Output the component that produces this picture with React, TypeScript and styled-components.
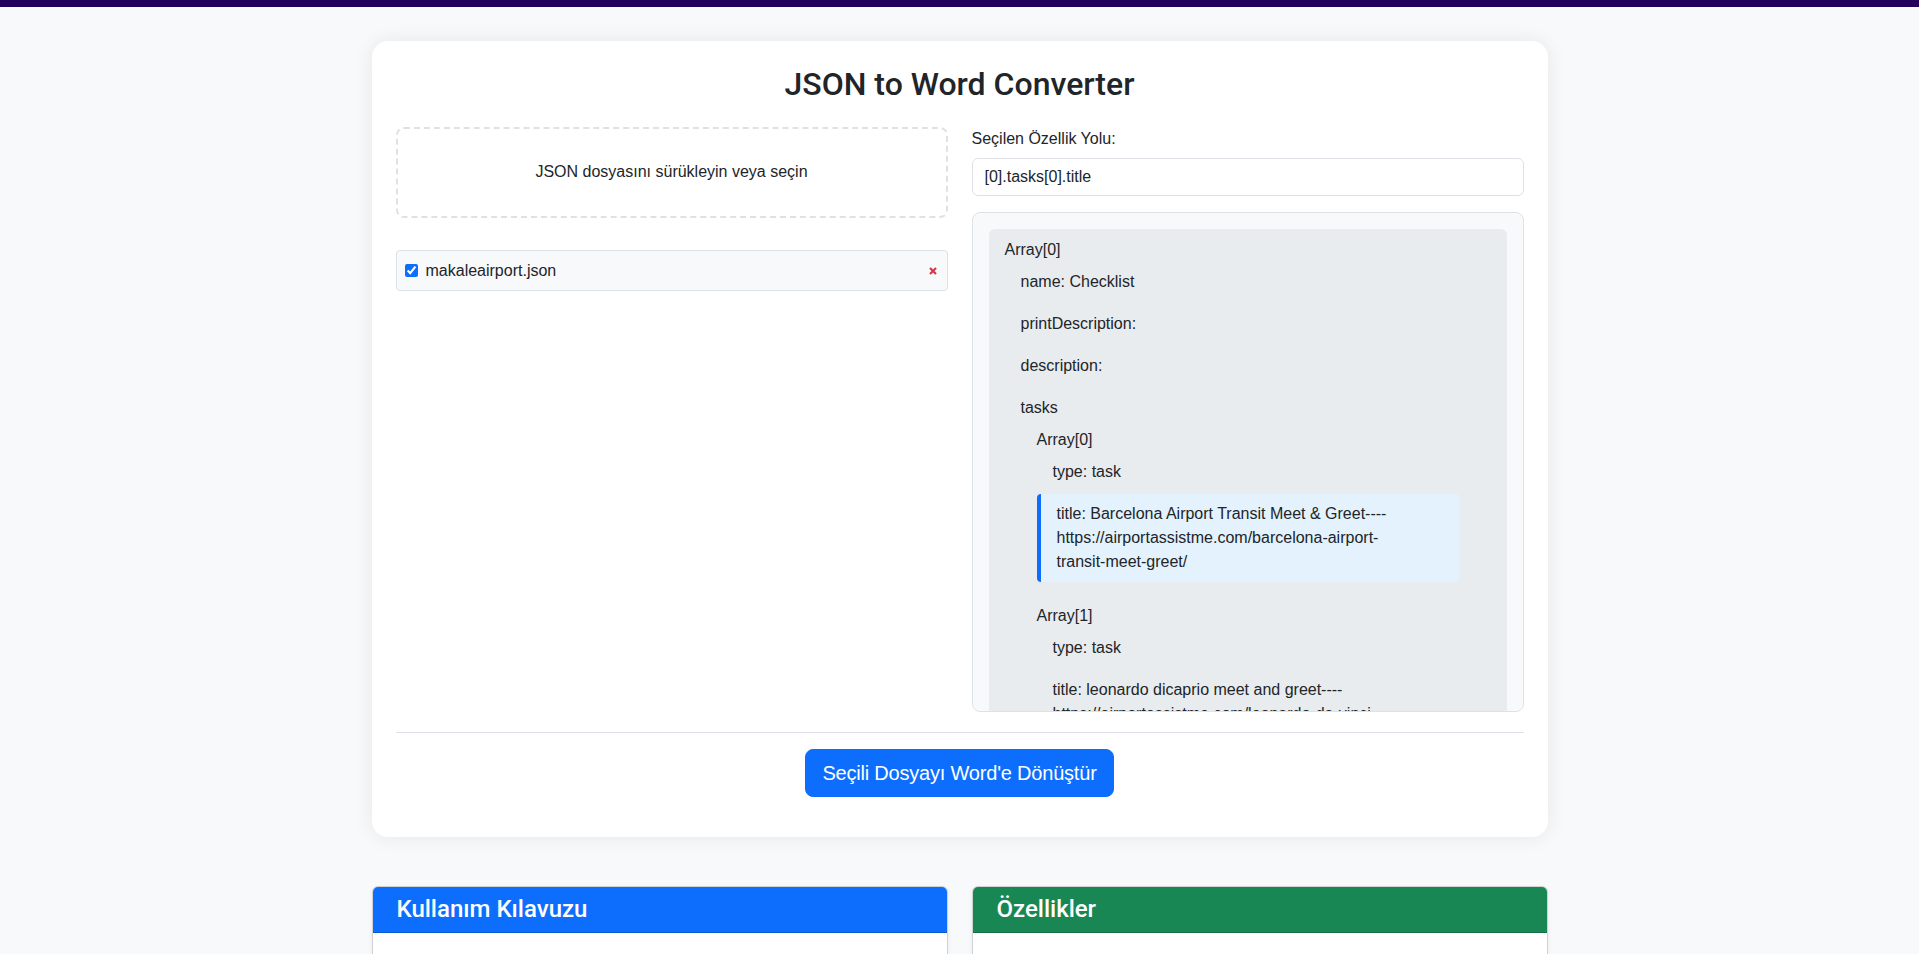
import React from "react";
import styled, { createGlobalStyle } from "styled-components";

const GlobalStyle = createGlobalStyle`
  *, *::before, *::after { box-sizing: border-box; }
  html, body { margin: 0; padding: 0; }
  body {
    background: #f8f9fa;
    font-family: "Liberation Sans", Arial, sans-serif;
    font-size: 16px;
    line-height: 1.5;
    color: #212529;
  }
`;

const TopBar = styled.div`
  height: 7px;
  background: #22005b;
`;

const Container = styled.main`
  width: 1176px;
  margin: 34px auto 0;
`;

const MainCard = styled.section`
  background: #fff;
  border-radius: 16px;
  box-shadow: 0 0 20px rgba(0, 0, 0, 0.08);
  padding: 24px;
`;

const Title = styled.h2`
  margin: 0 0 24px;
  font-family: Roboto, "Liberation Sans", Arial, sans-serif;
  font-weight: 500;
  font-size: 32px;
  line-height: 1.2;
  text-align: center;
  color: #212529;
`;

const Columns = styled.div`
  display: grid;
  grid-template-columns: 1fr 1fr;
  gap: 24px;
`;

const Column = styled.div`
  display: flex;
  flex-direction: column;
  min-width: 0;
`;

const DropZone = styled.div`
  border: 2px dashed #dee2e6;
  border-radius: 8px;
  padding: 31px 20px 32px;
  text-align: center;
  cursor: pointer;
`;

const FileList = styled.ul`
  list-style: none;
  margin: 32px 0 0;
  padding: 0;
  display: flex;
  flex-direction: column;
  gap: 8px;
`;

const FileItem = styled.li`
  display: flex;
  align-items: center;
  gap: 8px;
  padding: 7.5px 10px 7.5px 8px;
  background: #f8f9fa;
  border: 1px solid #dee2e6;
  border-radius: 4px;
`;

const FileCheckbox = styled.input`
  margin: 0;
  width: 13px;
  height: 13px;
  accent-color: #0d6efd;
`;

const FileName = styled.span`
  flex: 1;
`;

const RemoveButton = styled.button`
  border: none;
  background: none;
  padding: 0;
  display: flex;
  color: #dc3545;
  cursor: pointer;
`;

const FieldLabel = styled.label`
  display: block;
  margin-bottom: 7px;
`;

const PathInput = styled.input`
  width: 100%;
  height: 38px;
  padding: 6px 12px;
  border: 1px solid #dee2e6;
  border-radius: 6px;
  font: inherit;
  color: #212529;
  background: #fff;
  outline: none;
`;

const TreeBox = styled.div`
  margin-top: 16px;
  height: 500px;
  overflow: hidden;
  background: #f8f9fa;
  border: 1px solid #dee2e6;
  border-radius: 8px;
  padding: 16px;
`;

const RootNode = styled.div`
  background: #e9ecef;
  border-radius: 6px;
  padding: 9px 16px 8px;
`;

const NestedNode = styled.div`
  margin: 8px 0 12px;
  padding: 0 16px;
`;

const NodeLabel = styled.div`
  line-height: 24px;
`;

const Children = styled.div`
  display: flex;
  flex-direction: column;
  gap: 2px;
`;

const Leaf = styled.div<{ $selected?: boolean }>`
  padding: 8px 48px 8px 16px;
  line-height: 24px;
  border-radius: 4px;
  border-left: ${(p) => (p.$selected ? "4px solid #0d6efd" : "none")};
  background: ${(p) => (p.$selected ? "#e3f2fd" : "transparent")};
  cursor: pointer;
`;

const Divider = styled.hr`
  border: 0;
  border-top: 1px solid #dee2e6;
  margin: 20px 0 16px;
`;

const Actions = styled.div`
  display: flex;
  justify-content: center;
  margin-bottom: 16px;
`;

const ConvertButton = styled.button`
  background: #0d6efd;
  color: #fff;
  border: 1px solid #0d6efd;
  border-radius: 8px;
  padding: 8px 16px;
  font-family: "Liberation Sans", Arial, sans-serif;
  font-size: 20px;
  letter-spacing: -0.2px;
  line-height: 1.5;
  cursor: pointer;
`;

const InfoGrid = styled.div`
  display: grid;
  grid-template-columns: 1fr 1fr;
  gap: 24px;
  margin-top: 49px;
  margin-bottom: 40px;
`;

const InfoCard = styled.section`
  background: #fff;
  border: 1px solid rgba(0, 0, 0, 0.175);
  border-radius: 6px;
  overflow: hidden;
  box-shadow: 0 2px 4px rgba(0, 0, 0, 0.075);
`;

const InfoHeader = styled.div<{ $tone: string }>`
  background: ${(p) => p.$tone};
  color: #fff;
  padding: 8px 24px;
  border-bottom: 1px solid rgba(0, 0, 0, 0.175);
`;

const InfoTitle = styled.h4`
  margin: 0;
  font-family: Roboto, "Liberation Sans", Arial, sans-serif;
  font-size: 24px;
  font-weight: 500;
  line-height: 1.2;
`;

const InfoBody = styled.div`
  padding: 19px 24px 16px;
`;

const InfoList = styled.ul`
  margin: 0;
  padding-left: 0;
  list-style: none;
  display: flex;
  flex-direction: column;
  gap: 8px;
`;

type TreeItem = {
  label: string;
  value?: string;
  selected?: boolean;
  children?: TreeItem[];
};

const tree: TreeItem = {
  label: "Array[0]",
  children: [
    { label: "name", value: "Checklist" },
    { label: "printDescription", value: "" },
    { label: "description", value: "" },
    {
      label: "tasks",
      children: [
        {
          label: "Array[0]",
          children: [
            { label: "type", value: "task" },
            {
              label: "title",
              value:
                "Barcelona Airport Transit Meet & Greet----https://airportassistme.com/barcelona-airport-transit-meet-greet/",
              selected: true,
            },
          ],
        },
        {
          label: "Array[1]",
          children: [
            { label: "type", value: "task" },
            {
              label: "title",
              value:
                "leonardo dicaprio meet and greet----https://airportassistme.com/leonardo-da-vinci-airport-meet-greet/",
            },
          ],
        },
        {
          label: "Array[2]",
          children: [
            { label: "type", value: "task" },
            { label: "title", value: "Rome Airport Meet & Greet" },
          ],
        },
      ],
    },
  ],
};

const XIcon = () => (
  <svg width="8" height="8" viewBox="0 0 8 8" aria-hidden="true">
    <path d="M1 1L7 7M7 1L1 7" stroke="currentColor" strokeWidth="2.2" strokeLinecap="butt" />
  </svg>
);

function renderChildren(items: TreeItem[]) {
  return items.map((item, i) =>
    item.children ? (
      <NestedNode key={i}>
        <NodeLabel>{item.label}</NodeLabel>
        <Children>{renderChildren(item.children)}</Children>
      </NestedNode>
    ) : (
      <Leaf key={i} $selected={item.selected}>
        {item.label}: {item.value}
      </Leaf>
    )
  );
}

export default function App() {
  return (
    <>
      <GlobalStyle />
      <TopBar />
      <Container>
        <MainCard>
          <Title>JSON to Word Converter</Title>
          <Columns>
            <Column>
              <DropZone>JSON dosyasını sürükleyin veya seçin</DropZone>
              <FileList>
                <FileItem>
                  <FileCheckbox type="checkbox" defaultChecked />
                  <FileName>makaleairport.json</FileName>
                  <RemoveButton aria-label="Kaldır">
                    <XIcon />
                  </RemoveButton>
                </FileItem>
              </FileList>
            </Column>
            <Column>
              <FieldLabel>Seçilen Özellik Yolu:</FieldLabel>
              <PathInput readOnly value="[0].tasks[0].title" />
              <TreeBox>
                <RootNode>
                  <NodeLabel>{tree.label}</NodeLabel>
                  <Children>{renderChildren(tree.children || [])}</Children>
                </RootNode>
              </TreeBox>
            </Column>
          </Columns>
          <Divider />
          <Actions>
            <ConvertButton>Seçili Dosyayı Word'e Dönüştür</ConvertButton>
          </Actions>
        </MainCard>
        <InfoGrid>
          <InfoCard>
            <InfoHeader $tone="#0d6efd">
              <InfoTitle>Kullanım Kılavuzu</InfoTitle>
            </InfoHeader>
            <InfoBody>
              <InfoList>
                <li>Dosya Seçimi &amp; Özellik Yolu belirleme</li>
                <li>JSON dosyanızı yukarıdaki alana sürükleyin veya seçin.</li>
                <li>Ağaç görünümünden dönüştürmek istediğiniz özelliğe tıklayın.</li>
                <li>"Seçili Dosyayı Word'e Dönüştür" butonuna basın.</li>
              </InfoList>
            </InfoBody>
          </InfoCard>
          <InfoCard>
            <InfoHeader $tone="#198754">
              <InfoTitle>Özellikler</InfoTitle>
            </InfoHeader>
            <InfoBody>
              <InfoList>
                <li>Dinamik JSON Ağacı ile Özellik Seçimi</li>
                <li>Birden fazla JSON dosyası ile çalışma</li>
                <li>İç içe dizi ve nesne desteği</li>
                <li>Tek tıkla Word (.docx) çıktısı</li>
              </InfoList>
            </InfoBody>
          </InfoCard>
        </InfoGrid>
      </Container>
    </>
  );
}
